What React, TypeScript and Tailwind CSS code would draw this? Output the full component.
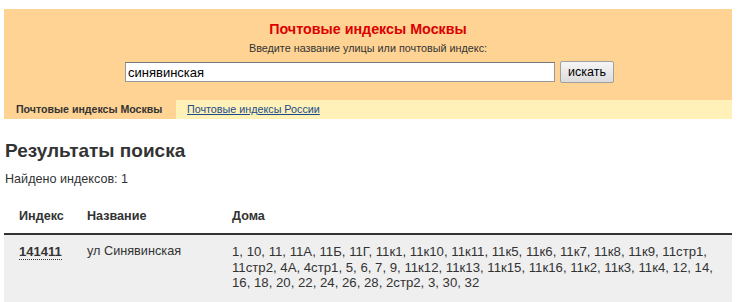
import React from 'react';

const houses =
  '1, 10, 11, 11А, 11Б, 11Г, 11к1, 11к10, 11к11, 11к5, 11к6, 11к7, 11к8, 11к9, 11стр1, 11стр2, 4А, 4стр1, 5, 6, 7, 9, 11к12, 11к13, 11к15, 11к16, 11к2, 11к3, 11к4, 12, 14, 16, 18, 20, 22, 24, 26, 28, 2стр2, 3, 30, 32';

export default function App() {
  return (
    <div className="w-[741px] h-[302px] overflow-hidden bg-white font-['Liberation_Sans',Arial,sans-serif] text-[#333]">
      <div className="ml-[4px] mt-[9px] w-[728px] bg-[#fed394]">
        <div className="flex flex-col items-center pt-[11px] h-[91px]">
          <h1 className="text-[14.3px] leading-[18px] font-bold text-[#dd0000]">Почтовые индексы Москвы</h1>
          <p className="text-[10.8px] leading-[14px] mt-[3px] text-[#333]">Введите название улицы или почтовый индекс:</p>
          <div className="flex items-center gap-[5px] mt-[6px] pl-[3px]">
            <input
              defaultValue="синявинская"
              className="w-[430px] h-[20px] bg-white border border-[#999] border-t-[#777] px-[2px] text-[13px] text-black outline-none"
            />
            <button className="h-[22px] px-[7px] text-[12.5px] text-black bg-gradient-to-b from-[#f6f6f6] to-[#dcdcdc] border border-[#a0a0a0] rounded-[2px]">
              искать
            </button>
          </div>
        </div>
        <div className="flex h-[19px] leading-[19px]">
          <div className="w-[172px] pl-[12px] text-[10.6px] font-bold text-[#333]">Почтовые индексы Москвы</div>
          <div className="flex-1 bg-[#fff1b7] pl-[11px] text-[10.75px]">
            <a href="#" className="text-[#1a4d8c] underline">Почтовые индексы России</a>
          </div>
        </div>
      </div>

      <h2 className="ml-[5px] mt-[20px] text-[19px] leading-[24px] font-bold text-[#333]">Результаты поиска</h2>
      <p className="ml-[5px] mt-[8px] text-[12.6px] leading-[16px]">Найдено индексов: 1</p>

      <table className="ml-[4px] mt-[11px] w-[728px] border-collapse">
        <thead>
          <tr className="border-b-2 border-[#333] text-[12.6px] leading-[16px]">
            <th className="text-left font-bold pl-[15px] w-[83px] pt-[10px] pb-[9px]">Индекс</th>
            <th className="text-left font-bold w-[145px] pt-[10px] pb-[9px]">Название</th>
            <th className="text-left font-bold pt-[10px] pb-[9px]">Дома</th>
          </tr>
        </thead>
        <tbody>
          <tr className="bg-[#efefef]">
            <td className="pl-[15px] pt-[9px] pb-[14px] align-top text-[13px] leading-[15.5px]">
              <span className="font-bold border-b border-dotted border-[#333]">141411</span>
            </td>
            <td className="pt-[9px] align-top text-[12.7px] leading-[15.5px]">ул Синявинская</td>
            <td className="pt-[9px] pr-[8px] pb-[14px] align-top text-[13.2px] leading-[15.5px]">{houses}</td>
          </tr>
        </tbody>
      </table>
    </div>
  );
}
